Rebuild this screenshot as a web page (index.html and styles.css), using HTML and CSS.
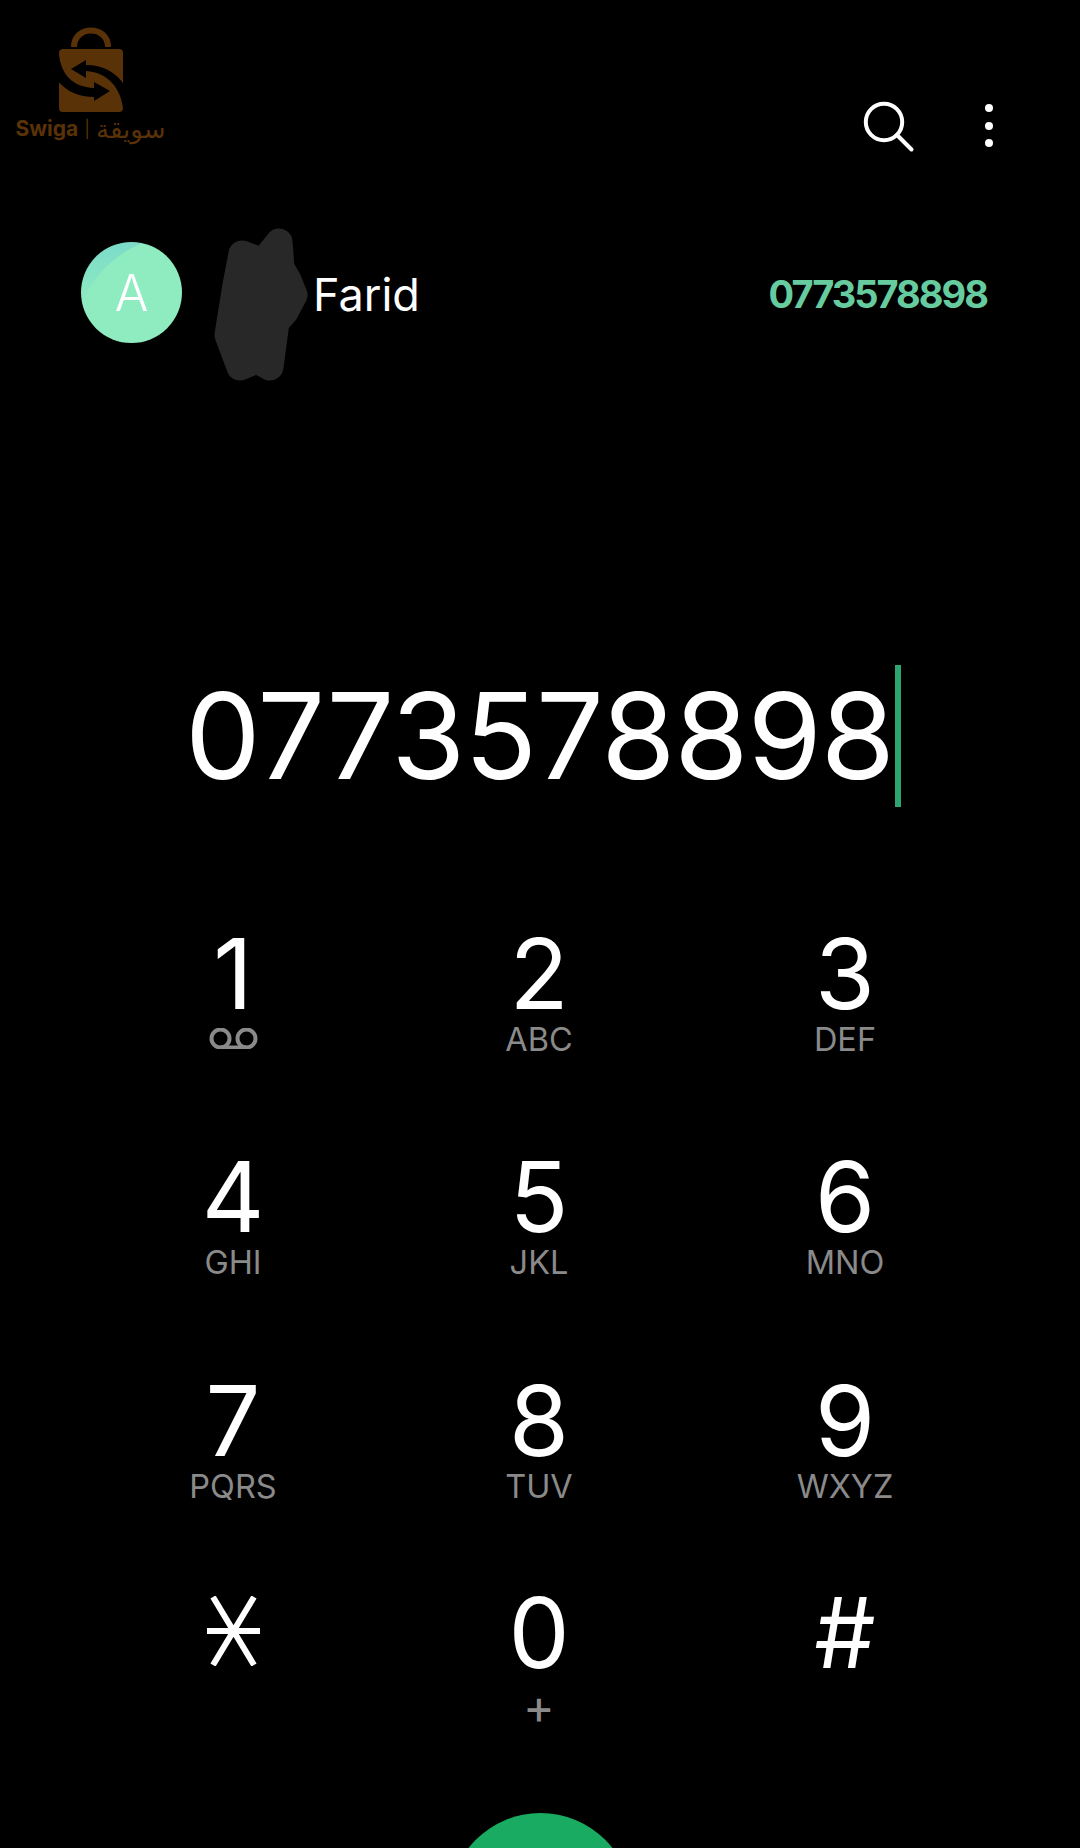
FILE: index.html
```html
<!DOCTYPE html>
<html lang="en">
<head>
<meta charset="utf-8">
<title>Dialer</title>
<link rel="stylesheet" href="styles.css">
</head>
<body>
<main class="screen">
  <header class="top">
    <div class="brand">
      <svg class="bag" viewBox="50 24 80 92" aria-hidden="true">
        <path class="bag-handle" d="M73 47 C73 25 107 25 107 47"/>
        <rect class="bag-body" x="58" y="49" width="64" height="63" rx="4"/>
        <path class="bag-cut" d="M56 54 L58 54 C60 75 72 87 93 88 L93 82 L109 91 L93 101 L93 97 C78 97 66 92 56 80 Z"/>
        <path class="bag-cut" d="M124 108 L122 108 C120 90 108 72 85 71 L85 78 L70 69 L85 60 L85 65 C102 65 115 72 124 86 Z"/>
      </svg>
      <div class="brand-name">Swiga<span class="brand-bar">|</span><span class="brand-ar" lang="ar" dir="rtl">سويقة</span></div>
    </div>
    <div class="actions">
      <svg class="icon-search" viewBox="0 0 50 50" aria-label="Search">
        <circle cx="21" cy="21" r="18.2"/>
        <path d="M34 34 L48.5 48.5"/>
      </svg>
      <div class="more" aria-label="More"><i></i><i></i><i></i></div>
    </div>
  </header>

  <section class="contact">
    <div class="avatar">A</div>
    <div class="name-wrap">
      <svg class="scribble" viewBox="214 228 96 154" aria-hidden="true">
        <path d="M242 254 L258 260 L266 258 L279 242 L281 268 L288 280 L294 295 L285 312 L276 322 L270 367 L257 360 L240 367 L228 335 L236 285 Z"/>
      </svg>
      <span class="name">Farid</span>
    </div>
    <span class="match">0773578898</span>
  </section>

  <section class="entry">
    <span class="entry-num">0773578898</span><span class="caret"></span>
  </section>

  <section class="pad">
    <div class="key"><span class="d">1</span>
      <svg class="vm" viewBox="0 0 49 21" aria-label="Voicemail"><circle cx="11.5" cy="10.5" r="9"/><circle cx="37.5" cy="10.5" r="9"/><path d="M11.5 19.5 H37.5"/></svg>
    </div>
    <div class="key"><span class="d">2</span><span class="s">ABC</span></div>
    <div class="key"><span class="d">3</span><span class="s">DEF</span></div>
    <div class="key"><span class="d">4</span><span class="s">GHI</span></div>
    <div class="key"><span class="d">5</span><span class="s">JKL</span></div>
    <div class="key"><span class="d">6</span><span class="s">MNO</span></div>
    <div class="key"><span class="d">7</span><span class="s">PQRS</span></div>
    <div class="key"><span class="d">8</span><span class="s">TUV</span></div>
    <div class="key"><span class="d">9</span><span class="s">WXYZ</span></div>
    <div class="key">
      <svg class="star" viewBox="0 0 53 70" aria-label="Star"><path d="M0 35 H53 M6 1 L47 69 M47 1 L6 69"/></svg>
    </div>
    <div class="key"><span class="d">0</span><span class="plus">+</span></div>
    <div class="key"><span class="d">#</span></div>
  </section>

  <div class="call"></div>
</main>
</body>
</html>
```

FILE: styles.css
```css
* { box-sizing: border-box; }
html, body { margin: 0; padding: 0; background: #000; }
.screen {
  width: 1080px;
  height: 1848px;
  overflow: hidden;
  background: #000;
  color: #fff;
  font-family: Inter, "Liberation Sans", sans-serif;
}

.top {
  height: 150px;
  display: flex;
  justify-content: space-between;
}
.brand {
  width: 181px;
  padding-top: 24px;
  display: flex;
  flex-direction: column;
  align-items: center;
}
.bag { width: 80px; height: 92px; display: block; }
.bag-handle { fill: none; stroke: #5a3207; stroke-width: 6; }
.bag-body { fill: #5a3207; }
.bag-cut { fill: #000; }
.brand-name {
  margin-top: -1px;
  display: flex;
  align-items: center;
  font: 700 21px/28px Inter, "DejaVu Sans", sans-serif;
  color: #5a3207;
  white-space: nowrap;
}
.brand-bar { font-size: 17px; font-weight: 400; margin: 0 6px; }
.brand-ar { font: 400 26px/28px "DejaVu Sans", sans-serif; }

.actions {
  display: flex;
  align-items: flex-start;
  padding: 101px 87px 0 0;
}
.icon-search { width: 50px; height: 50px; fill: none; stroke: #fff; stroke-width: 4; stroke-linecap: round; display: block; overflow: visible; }
.more {
  margin-left: 72px;
  padding-top: 3px;
  display: flex;
  flex-direction: column;
  gap: 9.5px;
}
.more i { display: block; width: 8px; height: 8px; border-radius: 50%; background: #fff; }

.contact {
  margin-top: 92px;
  height: 101px;
  padding: 0 93px 0 81px;
  display: flex;
  align-items: center;
}
.avatar {
  width: 101px;
  height: 101px;
  border-radius: 50%;
  flex: none;
  background:
    radial-gradient(circle 108px at 100% 100%, #8eecc0 99%, transparent 100%),
    linear-gradient(to bottom, #7cdbc9 0%, #8eecc0 65%);
  display: flex;
  align-items: center;
  justify-content: center;
  font-size: 50px;
  font-weight: 300;
}
.name-wrap {
  flex: 1;
  display: flex;
  align-items: center;
  margin-left: 32px;
}
.scribble {
  width: 96px;
  height: 154px;
  flex: none;
  fill: #282828;
  stroke: #282828;
  stroke-width: 27;
  stroke-linejoin: round;
  position: relative;
  top: 12px;
}
.name { font-size: 45px; margin: 3px 0 0 3px; }
.match { font-size: 38px; font-weight: 700; color: #66cc9f; letter-spacing: -2px; margin-top: 2px; }

.entry {
  margin-top: 322px;
  height: 142px;
  display: flex;
  justify-content: center;
  align-items: center;
  padding-left: 6px;
}
.entry-num { font-size: 120px; line-height: 142px; letter-spacing: -1.1px; }
.caret { width: 6px; height: 142px; background: #2ea56f; margin-left: 1px; }

.pad {
  margin-top: 118px;
  padding-left: 80px;
  display: grid;
  grid-template-columns: repeat(3, 306px);
  grid-template-rows: 223px 224px 212px 120px;
}
.key { display: flex; flex-direction: column; align-items: center; }
.d { font-size: 97px; line-height: 98px; }
.s { font-size: 32.5px; line-height: 36px; color: #8a8a8a; margin-top: -1px; }
.plus { font-size: 48px; line-height: 44px; color: #8a8a8a; margin-top: 3px; }
.vm { width: 49px; height: 21px; margin-top: 5px; fill: none; stroke: #8a8a8a; stroke-width: 4; }
.star { width: 53px; height: 70px; margin-top: 12px; fill: none; stroke: #fff; stroke-width: 6; }

.call {
  width: 183px;
  height: 183px;
  border-radius: 50%;
  background: #19ab62;
  margin: 109px auto 0;
}
```
